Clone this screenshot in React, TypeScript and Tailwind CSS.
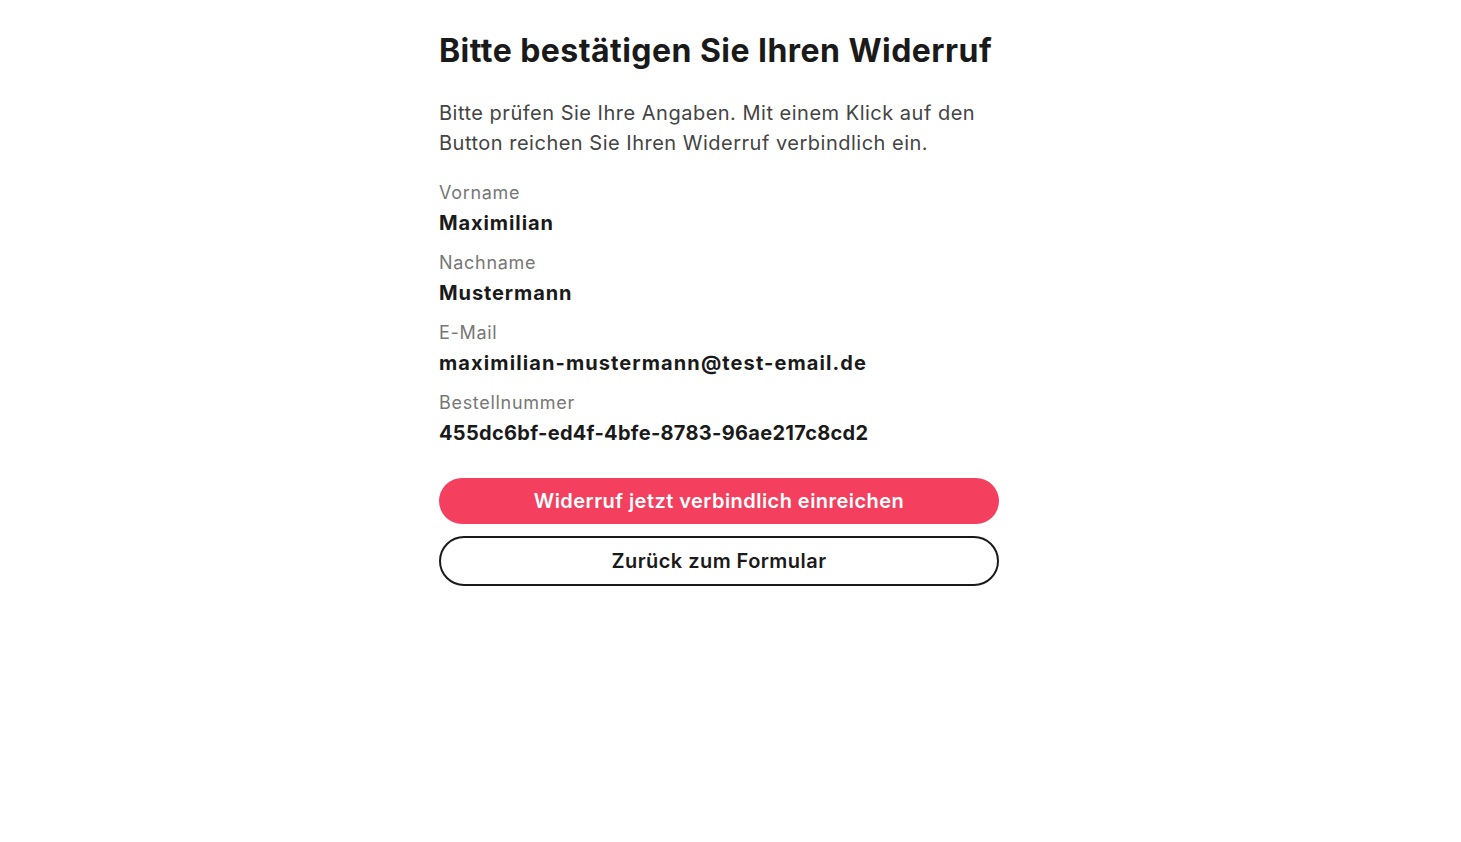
import React from 'react';

const fields = [
  { label: 'Vorname', value: 'Maximilian', track: 'tracking-[0.9px]' },
  { label: 'Nachname', value: 'Mustermann', track: 'tracking-[0.9px]' },
  { label: 'E-Mail', value: 'maximilian-mustermann@test-email.de', track: 'tracking-[1.1px]' },
  { label: 'Bestellnummer', value: '455dc6bf-ed4f-4bfe-8783-96ae217c8cd2', track: 'tracking-[0.3px]' },
];

export default function App() {
  return (
    <div className="min-h-screen bg-white flex justify-center pr-[23px] pt-[31px] font-['Inter',sans-serif]">
      <div className="w-[560px]">
        {/* Heading */}
        <h1 className="text-[32px] leading-[40px] font-bold text-[#1a1a1a] tracking-[0.45px]">
          Bitte bestätigen Sie Ihren Widerruf
        </h1>
        <p className="mt-[27px] text-[20px] leading-[30px] text-[#444] tracking-[0.5px]">
          Bitte prüfen Sie Ihre Angaben. Mit einem Klick auf den Button reichen Sie Ihren Widerruf verbindlich ein.
        </p>

        {/* Summary */}
        <div className="mt-[23px] flex flex-col gap-4">
          {fields.map((f) => (
            <div key={f.label} className="flex flex-col gap-[6px]">
              <span className="text-[18px] leading-[24px] text-[#777] tracking-[0.7px]">{f.label}</span>
              <span className={`text-[20px] leading-[24px] font-bold text-[#1a1a1a] ${f.track}`}>{f.value}</span>
            </div>
          ))}
        </div>

        {/* Actions */}
        <div className="mt-[33px] flex flex-col gap-3">
          <button className="h-[46px] w-full rounded-full bg-[#f43f5e] text-white text-[20px] font-semibold tracking-[0.45px]">
            Widerruf jetzt verbindlich einreichen
          </button>
          <button className="h-[50px] w-full rounded-full border-2 border-[#1a1a1a] bg-white text-[#1a1a1a] text-[20px] font-semibold tracking-[0.45px]">
            Zurück zum Formular
          </button>
        </div>
      </div>
    </div>
  );
}
